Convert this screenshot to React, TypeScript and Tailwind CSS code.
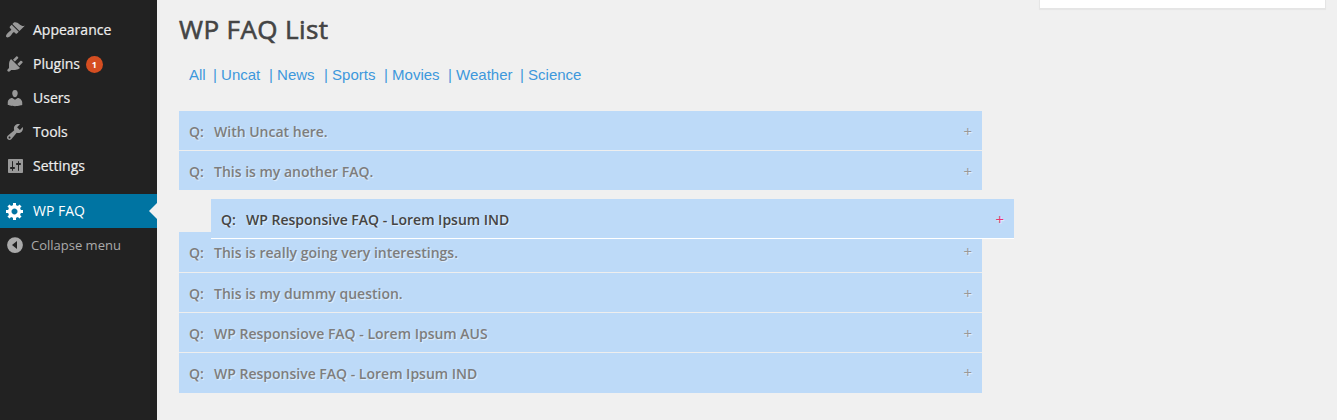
import React from "react";

const icons = {
  appearance:
    "M14.48 11.06L7.41 3.99l1.5-1.5c.5-.56 2.3-.47 3.51.32 1.21.8 1.43 1.28 2.91 2.1 1.18.64 2.45 1.26 4.45.85zm-.71.71L6.7 4.7 4.93 6.47c-.39.39-.39 1.02 0 1.41l1.06 1.06c.39.39.39 1.03 0 1.42-.6.6-1.43 1.11-2.21 1.69-.35.26-.7.53-1.01.84C1.43 14.23.4 16.08 1.4 17.07c.99 1 2.84-.03 4.18-1.36.31-.31.58-.66.85-1.02.57-.78 1.08-1.61 1.69-2.21.39-.39 1.02-.39 1.41 0l1.06 1.06c.39.39 1.02.39 1.41 0z",
  plugins:
    "M13.11 4.36L9.87 7.6 8 5.73l3.24-3.24c.35-.34 1.05-.2 1.56.32.52.51.66 1.21.31 1.55zm-8 1.77l.91-1.12 9.01 9.01-1.19.84c-.71.71-2.63 1.16-3.82 1.16H6.14L4.9 17.26c-.59.59-1.54.59-2.12 0-.59-.58-.59-1.53 0-2.12l1.24-1.24v-3.88c0-1.13.4-3.19 1.09-3.89zm7.26 3.97l3.24-3.24c.34-.35 1.04-.21 1.55.31.52.51.66 1.21.31 1.55l-3.24 3.25z",
  users:
    "M10 9.25c-2.27 0-2.73-3.44-2.73-3.44C7 4.02 7.82 2 9.97 2c2.16 0 2.98 2.02 2.71 3.81 0 0-.41 3.44-2.68 3.44zm0 2.57L12.72 10c2.39 0 4.52 2.33 4.52 4.53v2.49s-3.65 1.13-7.24 1.13c-3.65 0-7.24-1.13-7.24-1.13v-2.49c0-2.25 1.94-4.48 4.47-4.48z",
  tools:
    "M16.68 9.77c-1.34 1.34-3.3 1.67-4.95.99l-5.41 6.52c-.99.99-2.59.99-3.58 0s-.99-2.59 0-3.57l6.52-5.42c-.68-1.65-.35-3.61.99-4.95 1.28-1.28 3.12-1.62 4.72-1.06l-2.89 2.89 2.82 2.82 2.86-2.87c.53 1.58.18 3.39-1.08 4.65zM3.81 16.21c.4.39 1.04.39 1.43 0 .4-.4.4-1.04 0-1.43-.39-.4-1.03-.4-1.43 0-.39.39-.39 1.03 0 1.43z",
  settings:
    "M18 16V4c0-.55-.45-1-1-1H4c-.55 0-1 .45-1 1v12c0 .55.45 1 1 1h13c.55 0 1-.45 1-1zM8 11h1c.55 0 1 .45 1 1s-.45 1-1 1H8v1.5c0 .28-.22.5-.5.5s-.5-.22-.5-.5V13H6c-.55 0-1-.45-1-1s.45-1 1-1h1V5.5c0-.28.22-.5.5-.5s.5.22.5.5V11zm5-2h-1c-.55 0-1-.45-1-1s.45-1 1-1h1V5.5c0-.28.22-.5.5-.5s.5.22.5.5V7h1c.55 0 1 .45 1 1s-.45 1-1 1h-1v5.5c0 .28-.22.5-.5.5s-.5-.22-.5-.5V9z",
  generic:
    "M18 12h-2.18c-.17.7-.44 1.35-.81 1.93l1.54 1.54-2.1 2.1-1.54-1.54c-.58.36-1.23.63-1.91.79V19H8v-2.18c-.68-.16-1.33-.43-1.91-.79l-1.54 1.54-2.12-2.12 1.54-1.54c-.36-.58-.63-1.23-.79-1.91H1V9.03h2.17c.16-.7.44-1.35.8-1.94L2.43 5.55l2.1-2.1 1.54 1.54c.58-.37 1.24-.64 1.93-.81V2h3v2.18c.68.16 1.33.43 1.91.79l1.54-1.54 2.12 2.12-1.54 1.54c.36.59.64 1.24.8 1.94H18V12zm-8.5 1.5c1.66 0 3-1.34 3-3s-1.34-3-3-3-3 1.34-3 3 1.34 3 3 3z",
  collapse:
    "M10 2.2a7.9 7.9 0 1 0 0 15.8a7.9 7.9 0 1 0 0-15.8zM12 6v8l-5-4z",
};

function Icon({ d }: { d: string }) {
  return (
    <svg viewBox="0 0 20 20" className="h-5 w-5 shrink-0 fill-current" fillRule="evenodd">
      <path d={d} />
    </svg>
  );
}

function MenuItem({ icon, label, badge }: { icon: string; label: string; badge?: string }) {
  return (
    <a className="flex h-[34px] items-center pl-[5px] text-[#eee]">
      <span className="text-[#999]">
        <Icon d={icon} />
      </span>
      <span className="ml-2 pb-[2px] [-webkit-text-stroke:0.2px_#eee]">{label}</span>
      {badge && (
        <span className="mt-px ml-[6px] flex h-[17px] w-[17px] items-center justify-center rounded-full bg-[#d54e21] text-[9px] leading-[17px] font-bold text-white">
          {badge}
        </span>
      )}
    </a>
  );
}

function FaqRow({ title, className, active }: { title: string; className: string; active?: boolean }) {
  return (
    <div
      className={`flex w-[803px] items-center bg-[#bddaf8] px-[10px] text-[14px] font-semibold [text-shadow:1px_1px_1px_rgba(255,255,255,0.6)] ${active ? "text-[#444]" : "text-[#7d7d7d]"} ${className}`}
    >
      <span className="w-[25px]">Q:</span>
      <span className="grow">{title}</span>
      <span className={`pb-[2px] text-[15px] leading-[18px] font-normal ${active ? "text-[#e8356f]" : "text-[#999]"}`}>+</span>
    </div>
  );
}

const categories = [
  { name: "Uncat", width: "w-[56px]" },
  { name: "News", width: "w-[55px]" },
  { name: "Sports", width: "w-[60px]" },
  { name: "Movies", width: "w-[64px]" },
  { name: "Weather", width: "w-[72px]" },
  { name: "Science", width: "w-[72px]" },
];

export default function App() {
  return (
    <div className="flex h-[420px] w-[1337px] overflow-hidden bg-[#f0f0f0] font-['Open_Sans',sans-serif] text-[14px]">
      <nav className="w-[157px] shrink-0 bg-[#222] pt-[13px]">
        <MenuItem icon={icons.appearance} label="Appearance" />
        <MenuItem icon={icons.plugins} label="Plugins" badge="1" />
        <MenuItem icon={icons.users} label="Users" />
        <MenuItem icon={icons.tools} label="Tools" />
        <MenuItem icon={icons.settings} label="Settings" />
        <a className="mt-[11px] flex h-[34px] items-center bg-[#0074a2] pl-[5px] text-white">
          <Icon d={icons.generic} />
          <span className="ml-2 grow pb-[2px]">WP FAQ</span>
          <span className="h-0 w-0 border-y-8 border-r-8 border-y-transparent border-r-[#f0f0f0]" />
        </a>
        <a className="flex h-[34px] items-center pl-[5px] text-[13px] text-[#aaa]">
          <Icon d={icons.collapse} />
          <span className="ml-[6px] pt-[2px]">Collapse menu</span>
        </a>
      </nav>

      <main className="w-[882px] shrink-0 pl-[22px]">
        <h1 className="flex h-[60px] items-center pb-[2px] text-[26px] tracking-[0.4px] text-[#444] [-webkit-text-stroke:0.6px_#444]">
          WP FAQ List
        </h1>
        <div className="flex h-[51px] pt-[4px] pl-[10px] font-['Liberation_Sans',Arial,sans-serif] text-[15px] leading-[22px] text-[#3d98dc]">
          <a className="w-6">All</a>
          {categories.map((c) => (
            <a key={c.name} className={`whitespace-nowrap ${c.width}`}>
              | {c.name}
            </a>
          ))}
        </div>
        <div className="relative">
          <FaqRow title="With Uncat here." className="h-[40px] border-b border-[#eee] pt-[2px]" />
          <FaqRow title="This is my another FAQ." className="h-[39px] pt-[2px]" />
          <div className="h-[42px]" />
          <FaqRow title="This is really going very interestings." className="h-[41px] border-b border-[#eee]" />
          <FaqRow title="This is my dummy question." className="h-[40px] border-b border-[#eee] pt-[2px]" />
          <FaqRow title="WP Responsiove FAQ - Lorem Ipsum AUS" className="h-[40px] border-b border-[#eee] pt-[2px]" />
          <FaqRow title="WP Responsive FAQ - Lorem Ipsum IND" className="h-[40px]" />
          <FaqRow
            active
            title="WP Responsive FAQ - Lorem Ipsum IND"
            className="absolute top-[88px] left-[32px] h-[40px] border-b border-white pt-[2px]"
          />
        </div>
      </main>

      <aside className="h-[9px] w-[287px] border border-t-0 border-[#e5e5e5] bg-white shadow-[0_1px_1px_rgba(0,0,0,0.04)]" />
    </div>
  );
}
